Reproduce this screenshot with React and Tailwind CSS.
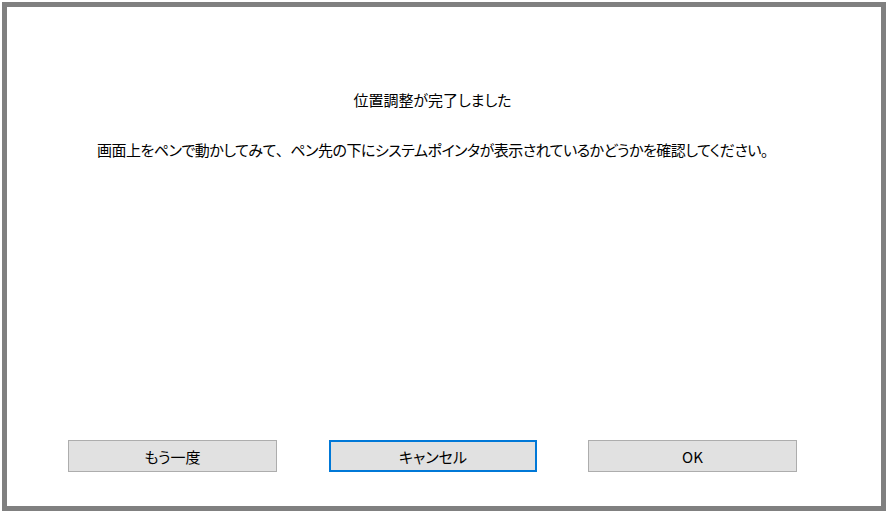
export default function App() {
  const font = { fontFamily: '"Noto Sans CJK JP", "Noto Sans", sans-serif', fontFeatureSettings: '"palt"' };
  return (
    <div className="w-[887px] h-[512px] bg-white pt-[2px] pl-[2px] pr-[1px] pb-[1px]" style={font}>
      <div className="h-full border-[5px] border-[#808080] bg-white pl-[61px] w-[884px]">
        <div className="w-[729px] h-full flex flex-col items-center text-[#000] text-[15px]">
          <div className="mt-[83px] leading-[20px]">位置調整が完了しました</div>
          <div className="mt-[30px] leading-[20px] whitespace-nowrap tracking-[-0.5px]">
            画面上をペンで動かしてみて<span style={{ fontFeatureSettings: 'normal' }}>、</span>ペン先の下にシステムポインタが表示されているかどうかを確認してください。
          </div>
          <div className="mt-auto mb-[34px] flex w-full">
            <button className="w-[209px] h-[32px] bg-[#e1e1e1] border border-[#adadad] text-[15px] leading-none">もう一度</button>
            <button className="ml-[52px] w-[208px] h-[32px] bg-[#e1e1e1] border-2 border-[#0078d7] text-[15px] leading-none">キャンセル</button>
            <button className="ml-[51px] w-[209px] h-[32px] bg-[#e1e1e1] border border-[#adadad] text-[15px] leading-none">OK</button>
          </div>
        </div>
      </div>
    </div>
  );
}
